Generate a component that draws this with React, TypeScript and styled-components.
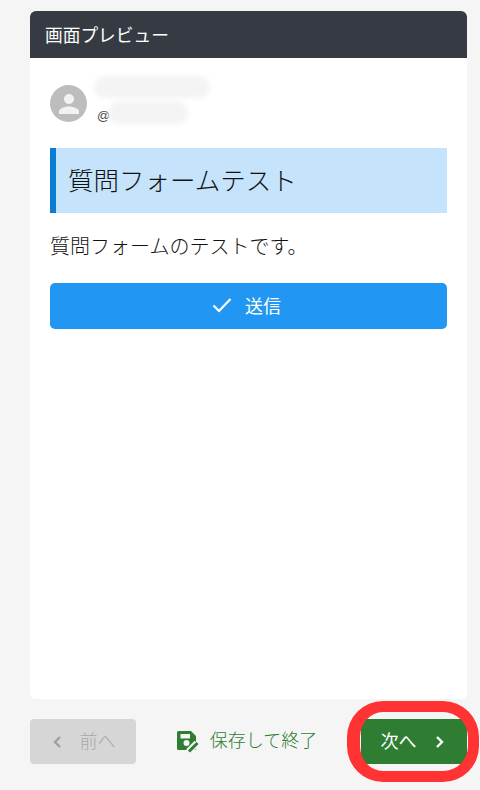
import React from "react";
import styled, { createGlobalStyle } from "styled-components";

const GlobalStyle = createGlobalStyle`
  html, body {
    margin: 0;
    padding: 0;
    background: #f5f5f5;
  }
  body {
    font-family: "Noto Sans CJK JP", "Noto Sans", sans-serif;
    font-weight: 300;
    color: #111;
  }
`;

const Page = styled.div`
  position: relative;
  width: 480px;
  height: 790px;
  box-sizing: border-box;
  padding: 11px 13px 0 30px;
  overflow: hidden;
  display: flex;
  flex-direction: column;
`;

const Card = styled.div`
  height: 688px;
  background: #fff;
  border-radius: 6px;
  overflow: hidden;
  display: flex;
  flex-direction: column;
`;

const CardHeader = styled.div`
  height: 47px;
  flex: none;
  background: #363b43;
  color: #fff;
  font-size: 17.7px;
  font-weight: 400;
  line-height: 46px;
  padding-left: 15px;
`;

const CardBody = styled.div`
  padding: 17px 20px 0;
  display: flex;
  flex-direction: column;
`;

const Profile = styled.div`
  display: flex;
  gap: 7px;
  height: 73px;
`;

const Avatar = styled.div`
  width: 37px;
  height: 37px;
  margin-top: 10px;
  border-radius: 50%;
  background: #bdbdbd;
  flex: none;
  display: flex;
  align-items: center;
  justify-content: center;
`;

const Names = styled.div`
  position: relative;
  flex: 1;
`;

const Smudge = styled.div<{ $w: number; $h: number; $x: number; $y: number }>`
  position: absolute;
  left: ${({ $x }) => $x}px;
  top: ${({ $y }) => $y}px;
  width: ${({ $w }) => $w}px;
  height: ${({ $h }) => $h}px;
  border-radius: 12px;
  background: #f4f4f4;
  filter: blur(2.5px);
`;

const Handle = styled.span`
  position: absolute;
  left: 3px;
  top: 33px;
  font-family: "Liberation Sans", sans-serif;
  font-weight: 400;
  font-size: 13px;
  line-height: 16px;
  color: #444;
`;

const Heading = styled.h1`
  margin: 0;
  height: 65px;
  box-sizing: border-box;
  background: #c6e3fc;
  border-left: 6px solid #0a7cd4;
  padding-left: 12px;
  font-size: 25.5px;
  font-weight: 300;
  line-height: 61px;
  color: #111;
`;

const Description = styled.p`
  margin: 18px 0 0;
  font-size: 20px;
  line-height: 30px;
  color: #111;
`;

const SendButton = styled.button`
  margin-top: 22px;
  height: 46px;
  border: none;
  border-radius: 5px;
  background: #2196f3;
  color: #fff;
  font: inherit;
  font-size: 18px;
  font-weight: 400;
  padding: 0 4px 2px 0;
  display: flex;
  align-items: center;
  justify-content: center;
  gap: 13px;
`;

const Footer = styled.div`
  margin-top: 20px;
  height: 45px;
  display: flex;
  align-items: center;
  justify-content: space-between;
`;

const NavButton = styled.button<{ $primary?: boolean }>`
  width: 106px;
  height: 45px;
  border: none;
  border-radius: 4px;
  padding: ${({ $primary }) => ($primary ? "0 2px 4px 0" : "0 0 4px")};
  font: inherit;
  font-size: 18px;
  font-weight: ${({ $primary }) => ($primary ? 400 : 300)};
  display: flex;
  align-items: center;
  justify-content: center;
  background: ${({ $primary }) => ($primary ? "#2e7d32" : "#d6d6d6")};
  color: ${({ $primary }) => ($primary ? "#fff" : "#a8a8a8")};
  gap: 17px;

  svg {
    margin-top: 4px;
  }
`;

const SaveLink = styled.a`
  display: flex;
  align-items: center;
  gap: 11px;
  margin: 0 13px 0 10px;
  padding-bottom: 5px;
  color: #2e7d32;
  font-size: 18px;

  svg {
    margin-top: 5px;
  }
`;

const Highlight = styled.div`
  position: absolute;
  left: 347px;
  top: 701px;
  width: 132px;
  height: 81px;
  box-sizing: border-box;
  border: 11px solid #ff3333;
  border-left-width: 13px;
  border-radius: 36px;
  pointer-events: none;
`;

const Chevron = ({ dir, color }: { dir: "left" | "right"; color: string }) => (
  <svg width="12" height="14" viewBox="0 0 12 14" fill="none">
    <path
      d={dir === "left" ? "M9 2L4 7l5 5" : "M3 2l5 5-5 5"}
      stroke={color}
      strokeWidth="2.4"
    />
  </svg>
);

export default function App() {
  return (
    <>
      <GlobalStyle />
      <Page>
        <Card>
          <CardHeader>画面プレビュー</CardHeader>
          <CardBody>
            <Profile>
              <Avatar>
                <svg width="30" height="30" viewBox="0 0 24 24" fill="#f2f2f2">
                  <path d="M12 12c2.200 0 4-1.800 4-4s-1.800-4-4-4-4 1.800-4 4 1.800 4 4 4zm0 2c-2.700 0-8 1.300-8 4v2h16v-2c0-2.700-5.300-4-8-4z" />
                </svg>
              </Avatar>
              <Names>
                <Smudge $x={0} $y={1} $w={116} $h={22} />
                <Handle>@</Handle>
                <Smudge $x={14} $y={26} $w={80} $h={23} />
              </Names>
            </Profile>
            <Heading>質問フォームテスト</Heading>
            <Description>質問フォームのテストです。</Description>
            <SendButton>
              <svg width="20" height="16" viewBox="0 0 20 16" fill="none">
                <path d="M1.500 8.500l5.500 5.500L18.500 2" stroke="#fff" strokeWidth="2.200" />
              </svg>
              送信
            </SendButton>
          </CardBody>
        </Card>
        <Footer>
          <NavButton disabled>
            <Chevron dir="left" color="#a0a0a0" />
            前へ
          </NavButton>
          <SaveLink>
            <svg width="22" height="22" viewBox="0 0 22 22">
              <path
                fill="#2e7d32"
                fillRule="evenodd"
                d="M1.500 0H14l5 5v12.500a1.500 1.500 0 0 1-1.500 1.500h-16A1.500 1.500 0 0 1 0 17.500v-16A1.500 1.500 0 0 1 1.500 0zM3.500 3v4.500h9.500V3H3.500zM9.500 9a3 3 0 1 0 0 6 3 3 0 0 0 0-6z"
              />
              <path d="M11.500 20.500L20 12" stroke="#f5f5f5" strokeWidth="6.500" />
              <path d="M12 20.500L20.500 12" stroke="#2e7d32" strokeWidth="3" />
            </svg>
            保存して終了
          </SaveLink>
          <NavButton $primary>
            次へ
            <Chevron dir="right" color="#fff" />
          </NavButton>
        </Footer>
        <Highlight />
      </Page>
    </>
  );
}
